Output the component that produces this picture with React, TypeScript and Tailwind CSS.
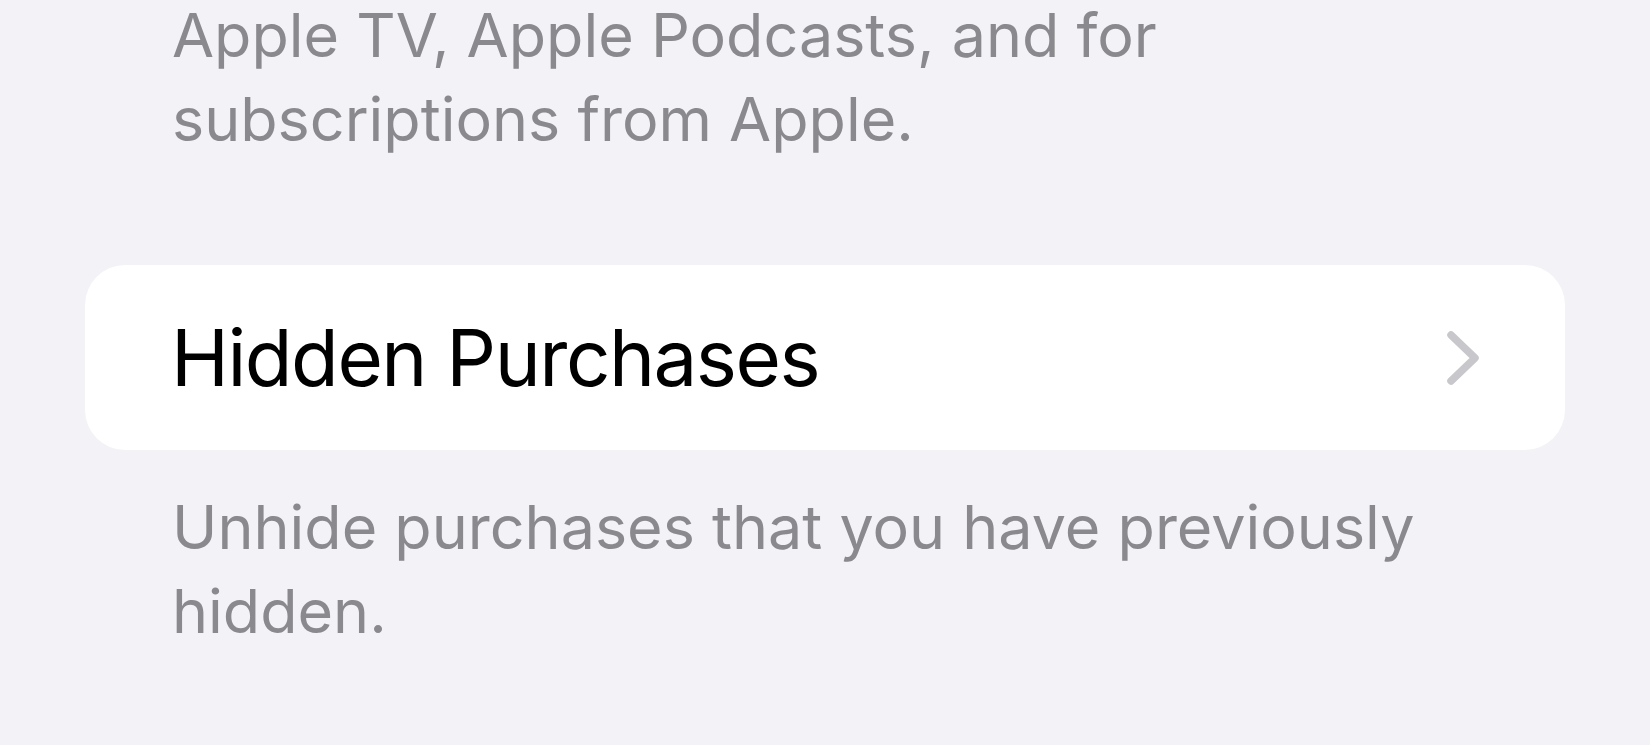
import React from "react";

export default function App() {
  return (
    <div className="w-[1650px] h-[745px] overflow-hidden bg-[#f2f2f7] px-[85px] font-['Inter','Liberation_Sans',sans-serif]">
      <p className="-mt-[7px] pl-[87px] text-[61px] leading-[84px] text-[#8a8a8e] whitespace-nowrap">
        Apple TV, Apple Podcasts, and for
        <br />
        subscriptions from Apple.
      </p>
      <div className="mt-[104px] flex h-[185px] items-center justify-between rounded-[40px] bg-white pl-[86px] pr-[85px]">
        <span className="text-[78px] leading-none tracking-[-1.5px] text-black whitespace-nowrap">Hidden Purchases</span>
        <svg width="34" height="56" viewBox="0 0 34 56" fill="none">
          <path d="M5 5 L29 28 L5 51" stroke="#c7c7cc" strokeWidth="7.5" strokeLinecap="round" strokeLinejoin="round" />
        </svg>
      </div>
      <p className="mt-[35px] pl-[87px] text-[61px] leading-[84px] text-[#8a8a8e] whitespace-nowrap">
        Unhide purchases that you have previously
        <br />
        hidden.
      </p>
    </div>
  );
}
